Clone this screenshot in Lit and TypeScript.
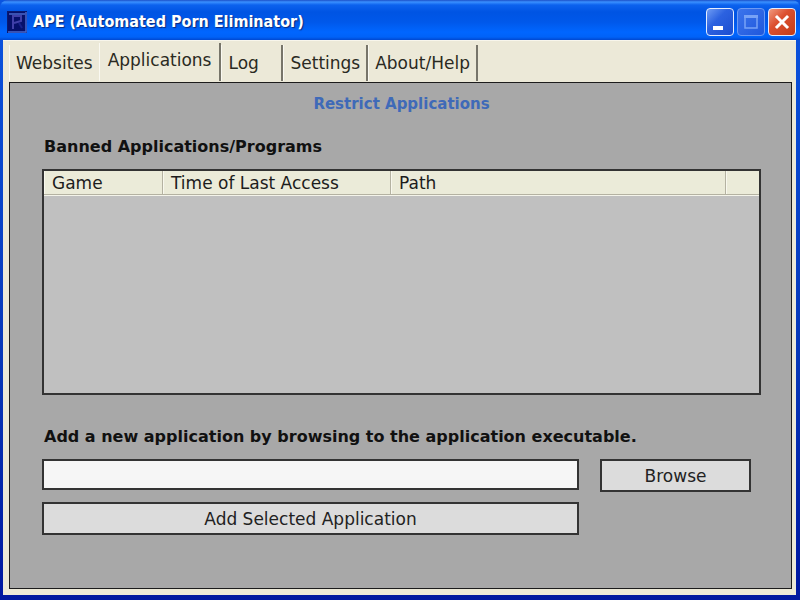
import { LitElement, html, css, svg } from "lit";
import { customElement, state } from "lit/decorators.js";

const appIcon = svg`
  <svg class="app-icon" viewBox="0 0 20 22" aria-hidden="true">
    <rect width="20" height="22" fill="#06106b" />
    <path d="M0.5 21.5V0.5H19.5" fill="none" stroke="#0a1a70" />
    <path d="M2 3H18M1 21H19V1" fill="none" stroke="#4a68cc" stroke-width="1.5" />
    <path d="M6 18V5H14V10L7 12" fill="none" stroke="#3f3fa8" stroke-width="2" />
    <path d="M12 12L15 17" fill="none" stroke="#18218c" stroke-width="2" />
  </svg>`;

@customElement("title-bar")
export class TitleBar extends LitElement {
  static styles = css`
    :host {
      display: flex;
      align-items: center;
      gap: 6px;
      height: 40px;
      box-sizing: border-box;
      padding: 4px 4px 0 7px;
      background: linear-gradient(#1c50c8 0, #3a90ff 2px, #0c62ee 5px, #0054e3 12px, #0058ea 22px, #0066ff 32px, #0062f8 37px, #0048d0 40px);
      border-radius: 8px 8px 0 0;
    }
    .app-icon {
      width: 20px;
      height: 22px;
      flex: none;
    }
    .title {
      flex: 1;
      margin: 0;
      font: bold 16px/22px "DejaVu Sans Condensed", "Noto Sans", sans-serif;
      color: #fff;
      text-shadow: 1px 1px 1px #0a2a80;
      white-space: nowrap;
    }
    .controls {
      display: flex;
      gap: 3px;
    }
    button {
      width: 28px;
      height: 28px;
      box-sizing: border-box;
      padding: 0;
      border: 1px solid #e4edff;
      border-radius: 4px;
      background: linear-gradient(135deg, #6f9cf4, #2c62e0 40%, #1c4ed0);
    }
    button:disabled {
      border-color: #6c9af4;
      background: linear-gradient(135deg, #3c74ec, #2058dc);
    }
    .close {
      background: linear-gradient(135deg, #f09a80, #dc5030 40%, #c43c18);
    }
    svg.glyph {
      display: block;
      width: 26px;
      height: 26px;
    }
  `;

  render() {
    return html`
      ${appIcon}
      <h1 class="title">APE (Automated Porn Eliminator)</h1>
      <div class="controls">
        <button aria-label="Minimize">
          <svg class="glyph" viewBox="0 0 26 26"><rect x="6" y="17" width="10" height="4" fill="#fff" /></svg>
        </button>
        <button aria-label="Maximize" disabled>
          <svg class="glyph" viewBox="0 0 26 26">
            <path d="M7 7.5H19V19H7Z" fill="none" stroke="#78a2f6" stroke-width="1.5" />
            <path d="M6 7.5H20" stroke="#78a2f6" stroke-width="3" />
          </svg>
        </button>
        <button class="close" aria-label="Close">
          <svg class="glyph" viewBox="0 0 26 26">
            <path d="M8 8L18 18M18 8L8 18" stroke="#fff" stroke-width="3" stroke-linecap="square" />
          </svg>
        </button>
      </div>
    `;
  }
}

@customElement("app-root")
export class AppRoot extends LitElement {
  static styles = css`
    :host {
      display: flex;
      flex-direction: column;
      min-height: 100vh;
      box-sizing: border-box;
      background: linear-gradient(#0a54e0, #0838b8 60%, #0018a0);
      font: 17px/22px "DejaVu Sans", Verdana, sans-serif;
      color: #1c1c1c;
    }
    .client {
      flex: 1;
      display: flex;
      flex-direction: column;
      margin: 0 4px 5px 3px;
      padding: 2px 4px 6px 6px;
      background: #ece9d8;
      border-top: 1px solid #f8f6ec;
    }
    .tabs {
      display: flex;
      align-items: flex-end;
      height: 39px;
    }
    .tab {
      height: 36px;
      box-sizing: border-box;
      margin: 0 0 1px;
      padding: 0 6px;
      border: 0 solid #77756a;
      border-right-width: 2px;
      border-left: 1px solid #faf9f2;
      background: #ece9d8;
      font: inherit;
      color: #2a2a22;
      text-align: left;
      white-space: nowrap;
    }
    .tab.first {
      border-right-width: 0;
    }
    .tab.short {
      min-width: 62px;
    }
    .tab.selected {
      height: 38px;
      padding: 0 8px 4px;
    }
    .panel {
      flex: 1;
      display: flex;
      flex-direction: column;
      padding: 10px 30px 53px 32px;
      border: 1px solid #1c1c1c;
      background: #a8a8a8;
    }
    .page-title,
    .section {
      margin: 0;
      font: bold 16px/22px "DejaVu Sans", Verdana, sans-serif;
      color: #111;
    }
    .page-title {
      font-size: 15px;
      text-align: center;
      color: #3f6ab8;
      margin-bottom: 21px;
    }
    .section {
      display: block;
      padding-left: 2px;
      margin-bottom: 11px;
    }
    .list {
      flex: 1;
      min-height: 120px;
      margin-bottom: 31px;
      border: 2px solid #333;
      background: #c0c0c0;
    }
    table {
      width: 100%;
      table-layout: fixed;
      border-collapse: separate;
      border-spacing: 0;
    }
    th {
      height: 22px;
      padding: 1px 8px 0;
      border-right: 1px solid #b4b2a2;
      border-bottom: 1px solid #b4b2a2;
      background: #ebebd9;
      box-shadow: inset 1px 0 #f8f8ee, 0 1px #f4f4ea;
      font-weight: normal;
      text-align: left;
    }
    th:last-child {
      border-right: 0;
    }
    .game {
      width: 102px;
    }
    .time {
      width: 211px;
    }
    .end {
      width: 17px;
    }
    .form {
      display: grid;
      grid-template-columns: 1fr 151px;
      gap: 10px 21px;
      align-items: start;
      margin-right: 10px;
    }
    input,
    .action {
      width: 100%;
      box-sizing: border-box;
      border: 2px solid #333;
      border-radius: 0;
      font: inherit;
      color: #222;
    }
    input {
      height: 31px;
      padding: 0 6px;
      background: #f6f6f6;
    }
    .action {
      height: 33px;
      padding: 0;
      background: #dcdcdc;
    }
  `;

  @state() private selected = "Applications";

  private tabs = ["Websites", "Applications", "Log", "Settings", "About/Help"];

  private tabClass(name: string, index: number) {
    return `tab${index === 0 ? " first" : ""}${name === "Log" ? " short" : ""}${
      name === this.selected ? " selected" : ""
    }`;
  }

  render() {
    return html`
      <title-bar></title-bar>
      <main class="client">
        <div class="tabs" role="tablist">
          ${this.tabs.map(
            (name, i) => html`<button
              class=${this.tabClass(name, i)}
              role="tab"
              aria-selected=${name === this.selected}
              @click=${() => (this.selected = name)}
            >${name}</button>`
          )}
        </div>
        <section class="panel" role="tabpanel">
          <h2 class="page-title">Restrict Applications</h2>
          <h3 class="section" id="banned">Banned Applications/Programs</h3>
          <div class="list">
            <table aria-labelledby="banned">
              <thead>
                <tr>
                  <th class="game">Game</th>
                  <th class="time">Time of Last Access</th>
                  <th>Path</th>
                  <th class="end"></th>
                </tr>
              </thead>
              <tbody></tbody>
            </table>
          </div>
          <label class="section" for="path">Add a new application by browsing to the application executable.</label>
          <div class="form">
            <input id="path" type="text" />
            <button class="action">Browse</button>
            <button class="action">Add Selected Application</button>
          </div>
        </section>
      </main>
    `;
  }
}
